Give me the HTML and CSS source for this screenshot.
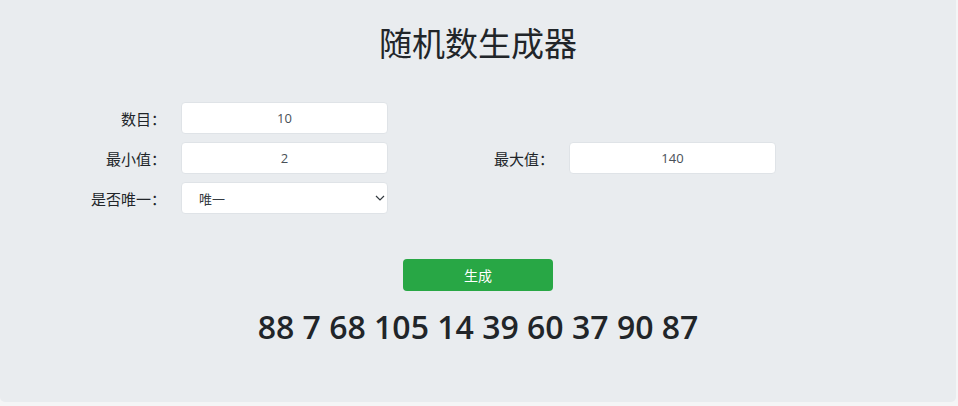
FILE: index.html
```html
<!DOCTYPE html>
<html lang="zh-CN">
<head>
<meta charset="utf-8">
<title>随机数生成器</title>
<link rel="stylesheet" href="styles.css">
</head>
<body>
<main class="panel">
  <h1 class="title">随机数生成器</h1>
  <form class="form">
    <div class="row">
      <div class="field">
        <label class="label" for="count">数目：</label>
        <input class="control" id="count" type="text" value="10">
      </div>
    </div>
    <div class="row">
      <div class="field">
        <label class="label" for="min">最小值：</label>
        <input class="control" id="min" type="text" value="2">
      </div>
      <div class="field">
        <label class="label" for="max">最大值：</label>
        <input class="control" id="max" type="text" value="140">
      </div>
    </div>
    <div class="row">
      <div class="field">
        <label class="label" for="unique">是否唯一：</label>
        <div class="select-wrap">
          <select class="control select" id="unique">
            <option>唯一</option>
            <option>不唯一</option>
          </select>
          <svg class="caret" width="10" height="6" viewBox="0 0 10 6"><path d="M1 1l4 4 4-4" fill="none" stroke="#343a40" stroke-width="1.2"/></svg>
        </div>
      </div>
    </div>
    <div class="actions">
      <button class="btn" type="button">生成</button>
    </div>
  </form>
  <p class="result">88 7 68 105 14 39 60 37 90 87</p>
</main>
</body>
</html>
```

FILE: styles.css
```css
html, body {
  margin: 0;
  padding: 0;
}

body {
  background: #f4f5f6;
  font-family: "Noto Sans CJK SC", "Noto Sans", sans-serif;
  color: #212529;
  width: 958px;
  height: 406px;
  overflow: hidden;
}

.panel {
  width: 956px;
  height: 402px;
  box-sizing: border-box;
  background: #e9ecef;
  border-radius: 0 0 5px 5px;
  padding-top: 14px;
}

.title {
  margin: 0;
  text-align: center;
  font-size: 33px;
  font-weight: 400;
  line-height: 56px;
  color: #212529;
}

.form {
  margin-top: 32px;
}

.row {
  display: flex;
  height: 32px;
  margin-bottom: 8px;
}

.field {
  display: flex;
  width: 388px;
  align-items: center;
}

.label {
  width: 166px;
  box-sizing: border-box;
  text-align: right;
  font-size: 15px;
  color: #212529;
  padding-right: 0;
}

.control {
  width: 207px;
  height: 32px;
  margin-left: 15px;
  box-sizing: border-box;
  border: 1px solid #dfe3e7;
  border-radius: 4px;
  background: #fff;
  font-family: "Open Sans", "Noto Sans CJK SC", sans-serif;
  font-size: 13px;
  color: #495057;
  text-align: center;
  outline: none;
}

.select-wrap {
  position: relative;
  margin-left: 15px;
}

.select-wrap .control {
  margin-left: 0;
}

.select {
  appearance: none;
  -webkit-appearance: none;
  text-align: left;
  padding-left: 17px;
  font-family: "Noto Sans CJK SC", sans-serif;
  color: #343a40;
}

.caret {
  position: absolute;
  right: 3px;
  top: 13px;
  pointer-events: none;
}

.actions {
  display: flex;
  justify-content: center;
  margin-top: 45px;
}

.btn {
  width: 150px;
  height: 32px;
  border: 0;
  border-radius: 4px;
  background: #28a745;
  color: #fff;
  font-family: "Noto Sans CJK SC", sans-serif;
  font-size: 14px;
}

.result {
  margin: 16px 0 0;
  text-align: center;
  font-family: "Open Sans", "Noto Sans", sans-serif;
  font-size: 32px;
  font-weight: 600;
  line-height: 40px;
  color: #212529;
}
```
